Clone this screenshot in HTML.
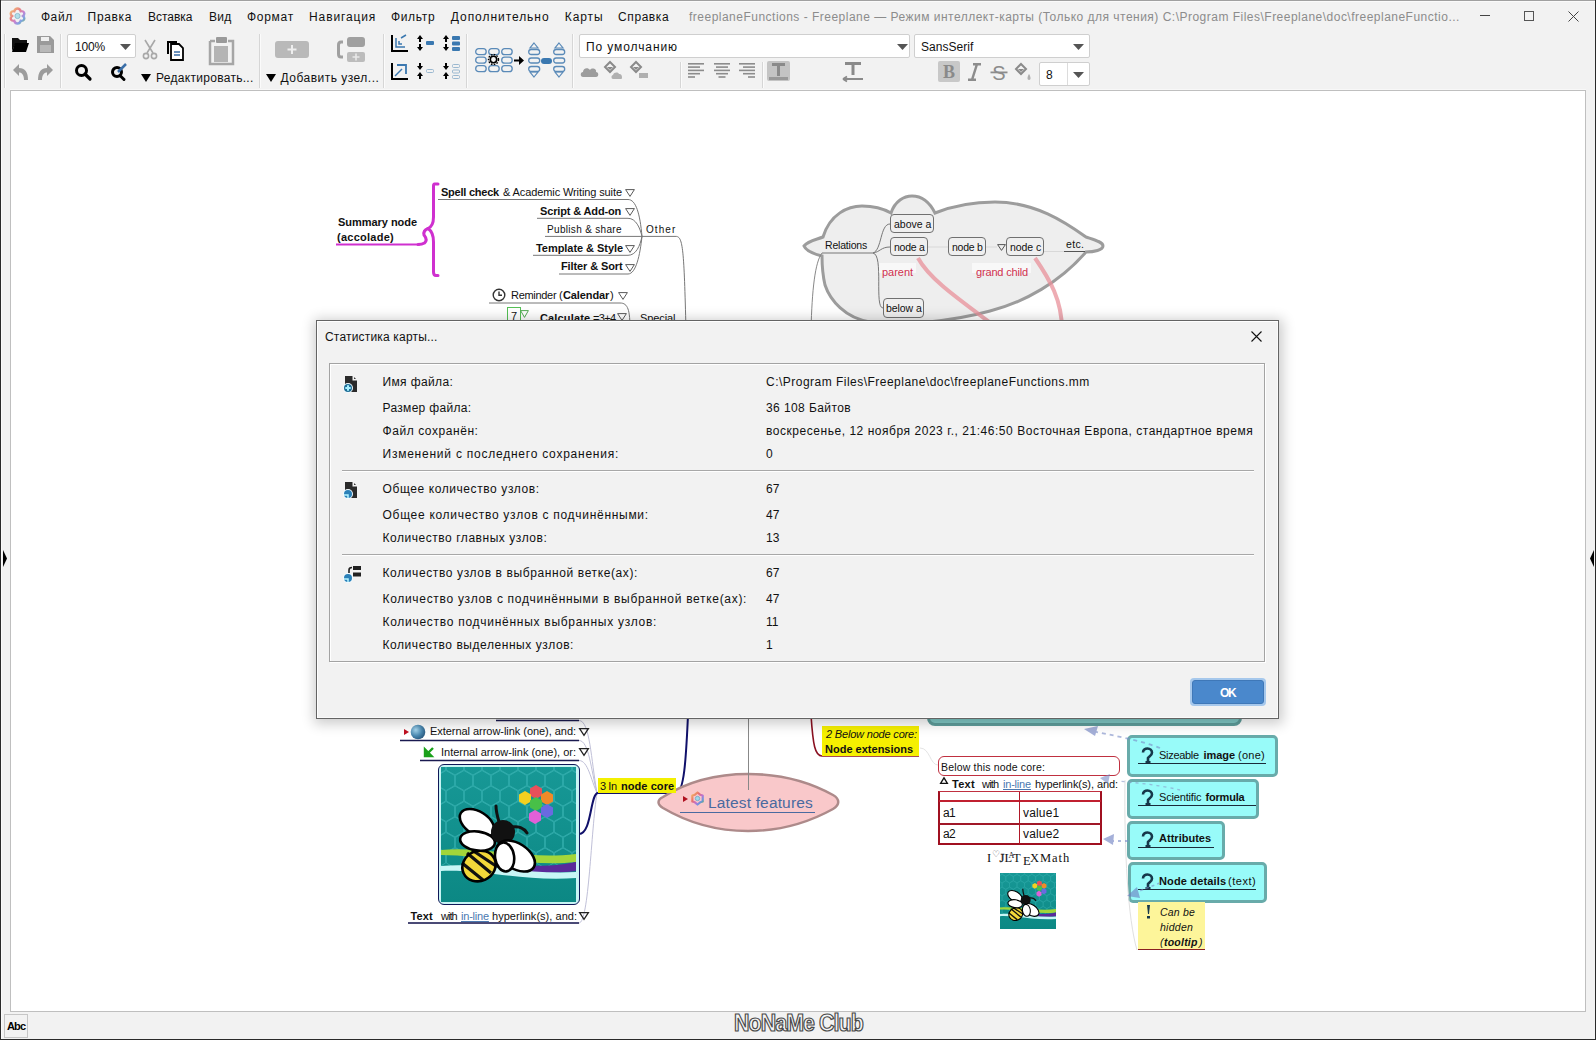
<!DOCTYPE html>
<html><head><meta charset="utf-8"><title>Freeplane</title>
<style>
html,body{margin:0;padding:0;}
body{width:1596px;height:1040px;position:relative;overflow:hidden;background:#f2f2f2;font-family:'Liberation Sans',sans-serif;}
svg{display:block}
</style></head><body>
<div style="position:absolute;left:0px;top:0px;width:1596px;height:1px;background:#a0a0a0"></div><div style="position:absolute;left:1px;top:1px;width:1594px;height:1px;background:#fafafa"></div><div style="position:absolute;left:1px;top:1px;width:1px;height:1038px;background:#fafafa"></div><div style="position:absolute;left:10px;top:89px;width:1576px;height:1px;background:#f8f8f8"></div><div style="position:absolute;left:10px;top:90px;width:1576px;height:922px;background:#fff;border:1px solid #bfbfbf;box-sizing:border-box"></div><svg style="position:absolute;left:9px;top:7px;overflow:visible;" width="17" height="18" viewBox="0 0 17 18">
<defs><linearGradient id="rb" x1="0" y1="0" x2="1" y2="1"><stop offset="0" stop-color="#f3c060"/><stop offset="0.35" stop-color="#e87070"/><stop offset="0.6" stop-color="#c070d0"/><stop offset="0.8" stop-color="#6a98e0"/><stop offset="1" stop-color="#60a860"/></linearGradient></defs>
<g transform="translate(8.5,9)" opacity="0.85">
<path d="M0,-7.5 C2,-7.5 3,-5.5 3.2,-4.8 C4.5,-5 6.8,-4.5 6.8,-2.5 C6.8,-1 5.5,0 5.5,0 C5.5,0 6.8,1 6.8,2.5 C6.8,4.5 4.5,5 3.2,4.8 C3,5.5 2,7.5 0,7.5 C-2,7.5 -3,5.5 -3.2,4.8 C-4.5,5 -6.8,4.5 -6.8,2.5 C-6.8,1 -5.5,0 -5.5,0 C-5.5,0 -6.8,-1 -6.8,-2.5 C-6.8,-4.5 -4.5,-5 -3.2,-4.8 C-3,-5.5 -2,-7.5 0,-7.5 Z" fill="none" stroke="url(#rb)" stroke-width="2.4"/>
<circle r="2.6" fill="#a8dce8" stroke="#70a8c0" stroke-width="0.8"/>
</g>
</svg><div style="position:absolute;left:40.90px;top:11px;white-space:pre;font:normal normal 12px 'Liberation Sans';line-height:12px;color:#111;letter-spacing:0.600px;">Файл</div><div style="position:absolute;left:87.60px;top:11px;white-space:pre;font:normal normal 12px 'Liberation Sans';line-height:12px;color:#111;letter-spacing:0.668px;">Правка</div><div style="position:absolute;left:147.90px;top:11px;white-space:pre;font:normal normal 12px 'Liberation Sans';line-height:12px;color:#111;letter-spacing:-0.005px;">Вставка</div><div style="position:absolute;left:208.90px;top:11px;white-space:pre;font:normal normal 12px 'Liberation Sans';line-height:12px;color:#111;letter-spacing:0.296px;">Вид</div><div style="position:absolute;left:247.00px;top:11px;white-space:pre;font:normal normal 12px 'Liberation Sans';line-height:12px;color:#111;letter-spacing:0.714px;">Формат</div><div style="position:absolute;left:309.10px;top:11px;white-space:pre;font:normal normal 12px 'Liberation Sans';line-height:12px;color:#111;letter-spacing:0.865px;">Навигация</div><div style="position:absolute;left:390.90px;top:11px;white-space:pre;font:normal normal 12px 'Liberation Sans';line-height:12px;color:#111;letter-spacing:0.672px;">Фильтр</div><div style="position:absolute;left:450.80px;top:11px;white-space:pre;font:normal normal 12px 'Liberation Sans';line-height:12px;color:#111;letter-spacing:0.951px;">Дополнительно</div><div style="position:absolute;left:564.80px;top:11px;white-space:pre;font:normal normal 12px 'Liberation Sans';line-height:12px;color:#111;letter-spacing:0.907px;">Карты</div><div style="position:absolute;left:618.10px;top:11px;white-space:pre;font:normal normal 12px 'Liberation Sans';line-height:12px;color:#111;letter-spacing:0.567px;">Справка</div><div style="position:absolute;left:689.00px;top:11px;white-space:pre;font:normal normal 12px 'Liberation Sans';line-height:12px;color:#8c8c8c;letter-spacing:0.488px;">freeplaneFunctions - Freeplane — Режим интеллект-карты (Только для чтения) C:\Program Files\Freeplane\doc\freeplaneFunctio...</div><div style="position:absolute;left:1480px;top:15px;width:10px;height:1px;background:#444"></div><div style="position:absolute;left:1524px;top:11px;width:10px;height:10px;border:1px solid #555;box-sizing:border-box"></div><svg style="position:absolute;left:1568px;top:11px;overflow:visible;" width="11" height="11" viewBox="0 0 11 11"><path d="M0.5,0.5 L10.5,10.5 M10.5,0.5 L0.5,10.5" stroke="#444" stroke-width="1"/></svg><div style="position:absolute;left:0px;top:0px;width:1px;height:1040px;background:#2a2a2a"></div><div style="position:absolute;left:1595px;top:0px;width:1px;height:1040px;background:#2a2a2a"></div><div style="position:absolute;left:0px;top:1039px;width:1596px;height:1px;background:#2a2a2a"></div><div style="position:absolute;left:4px;top:34px;width:1px;height:54px;background:#d6d6d6"></div><div style="position:absolute;left:5px;top:34px;width:1px;height:54px;background:#fbfbfb"></div><div style="position:absolute;left:60px;top:34px;width:1px;height:54px;background:#d6d6d6"></div><div style="position:absolute;left:61px;top:34px;width:1px;height:54px;background:#fbfbfb"></div><div style="position:absolute;left:259px;top:34px;width:1px;height:54px;background:#d6d6d6"></div><div style="position:absolute;left:260px;top:34px;width:1px;height:54px;background:#fbfbfb"></div><div style="position:absolute;left:383px;top:34px;width:1px;height:54px;background:#d6d6d6"></div><div style="position:absolute;left:384px;top:34px;width:1px;height:54px;background:#fbfbfb"></div><div style="position:absolute;left:466px;top:34px;width:1px;height:54px;background:#d6d6d6"></div><div style="position:absolute;left:467px;top:34px;width:1px;height:54px;background:#fbfbfb"></div><div style="position:absolute;left:572px;top:34px;width:1px;height:54px;background:#d6d6d6"></div><div style="position:absolute;left:573px;top:34px;width:1px;height:54px;background:#fbfbfb"></div><div style="position:absolute;left:680px;top:62px;width:1px;height:26px;background:#d6d6d6"></div><div style="position:absolute;left:681px;top:62px;width:1px;height:26px;background:#fbfbfb"></div><div style="position:absolute;left:762px;top:62px;width:1px;height:26px;background:#d6d6d6"></div><div style="position:absolute;left:763px;top:62px;width:1px;height:26px;background:#fbfbfb"></div><svg style="position:absolute;left:11px;top:36px;overflow:visible;" width="19" height="17" viewBox="0 0 19 17"><path d="M1,2 h6 l2,2 h7 v3 H5 L1,15 Z" fill="#111"/><path d="M4,7 H18 L15,16 H1 Z" fill="#000"/></svg><svg style="position:absolute;left:37px;top:36px;overflow:visible;" width="17" height="17" viewBox="0 0 17 17"><path d="M0,0 H13 L17,4 V17 H0 Z" fill="#9a9a9a"/><rect x="4" y="1" width="8" height="4" fill="#f0f0f0"/><rect x="3" y="9" width="11" height="7" fill="#b8b8b8"/></svg><svg style="position:absolute;left:12px;top:64px;overflow:visible;" width="17" height="16" viewBox="0 0 17 16"><path d="M1,6 L7,0 V4 C13,4 16,8 16,16 H12 C12,11 10,8.5 7,8.5 V12 Z" fill="#9c9c9c"/></svg><svg style="position:absolute;left:37px;top:64px;overflow:visible;" width="17" height="16" viewBox="0 0 17 16"><path d="M16,6 L10,0 V4 C4,4 1,8 1,16 H5 C5,11 7,8.5 10,8.5 V12 Z" fill="#9c9c9c"/></svg><div style="position:absolute;left:67px;top:34px;width:69px;height:24px;background:#fff;border:1px solid #cfcfcf;border-radius:2px;box-sizing:border-box"></div><div style="position:absolute;left:75.00px;top:41px;white-space:pre;font:normal normal 12px 'Liberation Sans';line-height:12px;color:#111;letter-spacing:-0.174px;">100%</div><svg style="position:absolute;left:120px;top:44px;overflow:visible;" width="11" height="6" viewBox="0 0 11 6"><path d="M0,0 H11 L5.5,6 Z" fill="#555"/></svg><svg style="position:absolute;left:74px;top:63px;overflow:visible;" width="18" height="18" viewBox="0 0 18 18"><circle cx="7.5" cy="7.5" r="5" fill="none" stroke="#000" stroke-width="3"/><path d="M11,11 L16,16" stroke="#000" stroke-width="3.2" stroke-linecap="round"/></svg><svg style="position:absolute;left:110px;top:63px;overflow:visible;" width="19" height="18" viewBox="0 0 19 18"><circle cx="7" cy="9" r="4.5" fill="none" stroke="#000" stroke-width="3"/><path d="M10,12.5 L14,16.5" stroke="#000" stroke-width="3" stroke-linecap="round"/><path d="M8,9 L16,1" stroke="#3a6ea8" stroke-width="2.5"/></svg><svg style="position:absolute;left:142px;top:40px;overflow:visible;" width="16" height="20" viewBox="0 0 16 20"><path d="M3,0 L11,13 M13,0 L5,13" stroke="#a8a8a8" stroke-width="1.6"/><circle cx="4" cy="16" r="2.6" fill="none" stroke="#a8a8a8" stroke-width="1.6"/><circle cx="12" cy="16" r="2.6" fill="none" stroke="#a8a8a8" stroke-width="1.6"/></svg><svg style="position:absolute;left:166px;top:40px;overflow:visible;" width="19" height="21" viewBox="0 0 19 21"><path d="M1,1 H11 V3 H3 V14 H1 Z" fill="#000"/><path d="M5,4 H13 L17,8 V20 H5 Z" fill="#fff" stroke="#000" stroke-width="1.8"/><path d="M8,12 H14 M8,15 H14" stroke="#3a6ea8" stroke-width="1.6"/></svg><svg style="position:absolute;left:208px;top:36px;overflow:visible;" width="27" height="30" viewBox="0 0 27 30"><path d="M2,5 H7 M20,5 H25 V28 H2 V5" fill="none" stroke="#a6a6a6" stroke-width="2.5"/><rect x="8" y="1" width="11" height="6" fill="#9a9a9a" rx="1"/><path d="M6,10 H20 V26 H6 Z" fill="#b4b4b4"/></svg><svg style="position:absolute;left:141px;top:74px;overflow:visible;" width="10" height="8" viewBox="0 0 10 8"><path d="M0,0 H10 L5,8 Z" fill="#000"/></svg><div style="position:absolute;left:156.00px;top:72px;white-space:pre;font:normal normal 12px 'Liberation Sans';line-height:12px;color:#111;letter-spacing:0.296px;">Редактировать...</div><svg style="position:absolute;left:266px;top:74px;overflow:visible;" width="10" height="8" viewBox="0 0 10 8"><path d="M0,0 H10 L5,8 Z" fill="#000"/></svg><div style="position:absolute;left:280.50px;top:72px;white-space:pre;font:normal normal 12px 'Liberation Sans';line-height:12px;color:#111;letter-spacing:0.488px;">Добавить узел...</div><svg style="position:absolute;left:275px;top:41px;overflow:visible;" width="34" height="18" viewBox="0 0 34 18"><rect x="0" y="0" width="34" height="17" rx="3" fill="#b9b9b9"/><path d="M17,4 V13 M12.5,8.5 H21.5" stroke="#eee" stroke-width="2"/></svg><svg style="position:absolute;left:336px;top:37px;overflow:visible;" width="30" height="26" viewBox="0 0 30 26"><path d="M7,5 H5 Q2.5,5 2.5,8 V17 Q2.5,20 5,20 H7" fill="none" stroke="#a0a0a0" stroke-width="3"/><rect x="11" y="0" width="18" height="10" rx="3" fill="#a0a0a0"/><rect x="11" y="15" width="18" height="10" rx="2" fill="#bcbcbc"/><path d="M20,16.5 V23.5 M16.5,20 H23.5" stroke="#e8e8e8" stroke-width="1.6"/></svg><svg style="position:absolute;left:391px;top:35px;overflow:visible;" width="18" height="17" viewBox="0 0 18 17"><path d="M1,0 V16 H17" fill="none" stroke="#000" stroke-width="2"/><path d="M5,3 V12 H14" fill="none" stroke="#3b78b0" stroke-width="1.5"/><path d="M8,6 V9 H11 M10,3 L15,0" fill="none" stroke="#3b78b0" stroke-width="1.5"/></svg><svg style="position:absolute;left:391px;top:63px;overflow:visible;" width="18" height="17" viewBox="0 0 18 17"><path d="M1,0 V16 H17" fill="none" stroke="#000" stroke-width="2"/><path d="M6,2 H15 V11" fill="none" stroke="#3b78b0" stroke-width="1.8"/><path d="M4,13 L11,6" fill="none" stroke="#3b78b0" stroke-width="1.4"/></svg><svg style="position:absolute;left:416px;top:35px;overflow:visible;" width="19" height="17" viewBox="0 0 19 17"><path d="M4,0 L7,4 H5 V7 H3 V4 H1 Z M4,16 L7,12 H5 V9 H3 V12 H1 Z" fill="#000"/><rect x="10" y="6" width="8" height="4" rx="1" fill="#3a78b0"/></svg><svg style="position:absolute;left:416px;top:63px;overflow:visible;" width="19" height="17" viewBox="0 0 19 17"><path d="M4,7 L7,3 H5 V0 H3 V3 H1 Z M4,9 L7,13 H5 V16 H3 V13 H1 Z" fill="#000"/><rect x="10.5" y="6.5" width="7" height="3" rx="1" fill="none" stroke="#9ab8d0"/></svg><svg style="position:absolute;left:442px;top:35px;overflow:visible;" width="18" height="17" viewBox="0 0 18 17"><path d="M4,0 L7,4 H5 V7 H3 V4 H1 Z M4,16 L7,12 H5 V9 H3 V12 H1 Z" fill="#000"/><rect x="10" y="1" width="8" height="4" rx="1" fill="#3a78b0"/><rect x="10" y="6.5" width="8" height="4" rx="1" fill="#3a78b0"/><rect x="10" y="12" width="8" height="4" rx="1" fill="#3a78b0"/></svg><svg style="position:absolute;left:442px;top:63px;overflow:visible;" width="18" height="17" viewBox="0 0 18 17"><path d="M4,7 L7,3 H5 V0 H3 V3 H1 Z M4,9 L7,13 H5 V16 H3 V13 H1 Z" fill="#000"/><rect x="10.5" y="1.5" width="7" height="3" rx="1" fill="none" stroke="#9ab8d0"/><rect x="10.5" y="7" width="7" height="3" rx="1" fill="none" stroke="#9ab8d0"/><rect x="10.5" y="12.5" width="7" height="3" rx="1" fill="none" stroke="#9ab8d0"/></svg><svg style="position:absolute;left:475px;top:48px;overflow:visible;" width="38" height="25" viewBox="0 0 38 25"><rect x="0.7" y="0.7" width="10.5" height="6" rx="3" fill="none" stroke="#5a8ab8" stroke-width="1.3"/><rect x="13.7" y="0.7" width="10.5" height="6" rx="3" fill="none" stroke="#5a8ab8" stroke-width="1.3"/><rect x="26.7" y="0.7" width="10.5" height="6" rx="3" fill="none" stroke="#5a8ab8" stroke-width="1.3"/><rect x="0.7" y="9.2" width="10.5" height="6" rx="3" fill="none" stroke="#5a8ab8" stroke-width="1.3"/><rect x="26.7" y="9.2" width="10.5" height="6" rx="3" fill="none" stroke="#5a8ab8" stroke-width="1.3"/><rect x="0.7" y="17.7" width="10.5" height="6" rx="3" fill="none" stroke="#5a8ab8" stroke-width="1.3"/><rect x="13.7" y="17.7" width="10.5" height="6" rx="3" fill="none" stroke="#5a8ab8" stroke-width="1.3"/><rect x="26.7" y="17.7" width="10.5" height="6" rx="3" fill="none" stroke="#5a8ab8" stroke-width="1.3"/><circle cx="18.5" cy="11.5" r="3.2" fill="none" stroke="#000" stroke-width="1.6"/><circle cx="18.5" cy="11.5" r="5" fill="none" stroke="#000" stroke-width="1.4" stroke-dasharray="1.6 1.3"/></svg><svg style="position:absolute;left:514px;top:56px;overflow:visible;" width="10" height="9" viewBox="0 0 10 9"><path d="M0,3.5 H5 V0 L10,4.5 L5,9 V5.5 H0 Z" fill="#000"/></svg><svg style="position:absolute;left:528px;top:43px;overflow:visible;" width="13" height="35" viewBox="0 0 13 35"><path d="M6,0 L10,5 H2 Z" fill="none" stroke="#5a8ab8" stroke-width="1.2"/><rect x="0.7" y="6.5" width="11" height="5" rx="2.5" fill="none" stroke="#5a8ab8" stroke-width="1.3"/><rect x="0.7" y="15" width="11" height="5" rx="2.5" fill="none" stroke="#5a8ab8" stroke-width="1.3"/><rect x="0.7" y="23.5" width="11" height="5" rx="2.5" fill="none" stroke="#5a8ab8" stroke-width="1.3"/><path d="M6,34 L10,29 H2 Z" fill="none" stroke="#5a8ab8" stroke-width="1.2"/></svg><div style="position:absolute;left:541px;top:58px;width:11px;height:6px;background:#3a78b0;border-radius:3px"></div><svg style="position:absolute;left:553px;top:43px;overflow:visible;" width="13" height="35" viewBox="0 0 13 35"><path d="M6,0 L10,5 H2 Z" fill="none" stroke="#5a8ab8" stroke-width="1.2"/><rect x="0.7" y="6.5" width="11" height="5" rx="2.5" fill="none" stroke="#5a8ab8" stroke-width="1.3"/><rect x="0.7" y="15" width="11" height="5" rx="2.5" fill="none" stroke="#5a8ab8" stroke-width="1.3"/><rect x="0.7" y="23.5" width="11" height="5" rx="2.5" fill="none" stroke="#5a8ab8" stroke-width="1.3"/><path d="M6,34 L10,29 H2 Z" fill="none" stroke="#5a8ab8" stroke-width="1.2"/></svg><div style="position:absolute;left:579px;top:34px;width:331px;height:24px;background:#fff;border:1px solid #cfcfcf;border-radius:2px;box-sizing:border-box"></div><div style="position:absolute;left:586.00px;top:41px;white-space:pre;font:normal normal 12px 'Liberation Sans';line-height:12px;color:#111;letter-spacing:0.895px;">По умолчанию</div><svg style="position:absolute;left:897px;top:44px;overflow:visible;" width="11" height="6" viewBox="0 0 11 6"><path d="M0,0 H11 L5.5,6 Z" fill="#555"/></svg><div style="position:absolute;left:914px;top:34px;width:176px;height:24px;background:#fff;border:1px solid #cfcfcf;border-radius:2px;box-sizing:border-box"></div><div style="position:absolute;left:921.00px;top:41px;white-space:pre;font:normal normal 12px 'Liberation Sans';line-height:12px;color:#111;letter-spacing:0.039px;">SansSerif</div><svg style="position:absolute;left:1073px;top:44px;overflow:visible;" width="11" height="6" viewBox="0 0 11 6"><path d="M0,0 H11 L5.5,6 Z" fill="#555"/></svg><svg style="position:absolute;left:580px;top:65px;overflow:visible;" width="19" height="13" viewBox="0 0 19 13"><path d="M3,12 C0,12 0,7 3,7 C3,3 8,2 10,5 C12,2 17,4 16,7 C19,7 19,12 16,12 Z" fill="#9c9c9c"/></svg><svg style="position:absolute;left:604px;top:62px;overflow:visible;" width="20" height="18" viewBox="0 0 20 18"><path d="M6,0 L11,5 L6,10 L1,5 Z" fill="none" stroke="#8a8a8a" stroke-width="2"/><path d="M3,5 H9 L6,8 Z" fill="#8a8a8a"/><path d="M9,17 C7,17 7,13 9,13 C10,10 14,10 15,12 C18,11 19,17 17,17 Z" fill="#b0b0b0"/></svg><svg style="position:absolute;left:630px;top:62px;overflow:visible;" width="20" height="18" viewBox="0 0 20 18"><path d="M6,0 L11,5 L6,10 L1,5 Z" fill="none" stroke="#8a8a8a" stroke-width="2"/><path d="M3,5 H9 L6,8 Z" fill="#8a8a8a"/><rect x="9" y="11" width="9" height="5" fill="#b0b0b0"/></svg><svg style="position:absolute;left:688px;top:63px;overflow:visible;" width="16" height="16" viewBox="0 0 16 16"><rect x="0" y="0.0" width="16" height="1.6" fill="#8c8c8c"/><rect x="0" y="3.3" width="12" height="1.6" fill="#8c8c8c"/><rect x="0" y="6.6" width="16" height="1.6" fill="#8c8c8c"/><rect x="0" y="9.899999999999999" width="12" height="1.6" fill="#8c8c8c"/><rect x="0" y="13.2" width="7" height="1.6" fill="#8c8c8c"/></svg><svg style="position:absolute;left:714px;top:63px;overflow:visible;" width="16" height="16" viewBox="0 0 16 16"><rect x="0.0" y="0.0" width="16" height="1.6" fill="#8c8c8c"/><rect x="2.0" y="3.3" width="12" height="1.6" fill="#8c8c8c"/><rect x="0.0" y="6.6" width="16" height="1.6" fill="#8c8c8c"/><rect x="2.0" y="9.899999999999999" width="12" height="1.6" fill="#8c8c8c"/><rect x="4.5" y="13.2" width="7" height="1.6" fill="#8c8c8c"/></svg><svg style="position:absolute;left:739px;top:63px;overflow:visible;" width="16" height="16" viewBox="0 0 16 16"><rect x="0" y="0.0" width="16" height="1.6" fill="#8c8c8c"/><rect x="4" y="3.3" width="12" height="1.6" fill="#8c8c8c"/><rect x="0" y="6.6" width="16" height="1.6" fill="#8c8c8c"/><rect x="4" y="9.899999999999999" width="12" height="1.6" fill="#8c8c8c"/><rect x="9" y="13.2" width="7" height="1.6" fill="#8c8c8c"/></svg><svg style="position:absolute;left:767px;top:61px;overflow:visible;" width="23" height="21" viewBox="0 0 23 21"><rect x="0" y="0" width="23" height="20" rx="2" fill="#c4c4c4"/><path d="M5,2 H18 V5 H13 V15 H10 V5 H5 Z" fill="#8a8a8a"/><rect x="2" y="16" width="19" height="3" fill="#999"/></svg><svg style="position:absolute;left:842px;top:61px;overflow:visible;" width="22" height="21" viewBox="0 0 22 21"><path d="M3,1 H19 V4 H12.5 V14 H9.5 V4 H3 Z" fill="#8a8a8a"/><path d="M1,18 H21 M1,18 L5,15.5 M1,18 L5,20.5" stroke="#8a8a8a" stroke-width="1.8" fill="none"/></svg><svg style="position:absolute;left:938px;top:61px;overflow:visible;" width="22" height="21" viewBox="0 0 22 21"><rect x="0" y="0" width="22" height="21" rx="2" fill="#c8c8c8"/><text x="11" y="17" text-anchor="middle" font-family="Liberation Serif" font-weight="bold" font-size="18" fill="#8a8a8a">B</text></svg><svg style="position:absolute;left:966px;top:63px;overflow:visible;" width="16" height="18" viewBox="0 0 16 18"><path d="M7,1.2 H15 M2,16.8 H10 M11,1.2 L6,16.8" stroke="#8c8c8c" stroke-width="2.4" fill="none"/></svg><svg style="position:absolute;left:990px;top:62px;overflow:visible;" width="18" height="20" viewBox="0 0 18 20"><text x="9" y="17.5" text-anchor="middle" font-family="Liberation Sans" font-size="20" fill="#8c8c8c">S</text><rect x="0.5" y="9.5" width="17" height="1.8" fill="#8c8c8c"/></svg><svg style="position:absolute;left:1015px;top:64px;overflow:visible;" width="18" height="17" viewBox="0 0 18 17"><path d="M6,0 L11,5 L6,10 L1,5 Z" fill="none" stroke="#8a8a8a" stroke-width="2"/><path d="M3,5 H9 L6,8 Z" fill="#8a8a8a"/><path d="M14,10 C12,13 12,16 14,16 C16,16 16,13 14,10 Z" fill="#b0b0b0"/></svg><div style="position:absolute;left:1039px;top:62px;width:51px;height:24px;background:#fff;border:1px solid #cfcfcf;border-radius:2px;box-sizing:border-box"></div><div style="position:absolute;left:1067px;top:63px;width:1px;height:22px;background:#dcdcdc"></div><div style="position:absolute;left:1046.00px;top:69px;white-space:pre;font:normal normal 12px 'Liberation Sans';line-height:12px;color:#111;">8</div><svg style="position:absolute;left:1073px;top:72px;overflow:visible;" width="11" height="6" viewBox="0 0 11 6"><path d="M0,0 H11 L5.5,6 Z" fill="#555"/></svg><svg style="position:absolute;left:2px;top:550px;overflow:visible;" width="6" height="17" viewBox="0 0 6 17"><path d="M1,0 L5,8.5 L1,17 Z" fill="#000"/></svg><svg style="position:absolute;left:1589px;top:550px;overflow:visible;" width="6" height="17" viewBox="0 0 6 17"><path d="M5,0 L1,8.5 L5,17 Z" fill="#000"/></svg><div style="position:absolute;left:734px;top:1012px;height:24px;font:bold 23px 'Liberation Sans';line-height:23px;letter-spacing:-1px;color:#f6f6f6;-webkit-text-stroke:1.2px #4a4a4a;white-space:pre;transform-origin:0 0;transform:scaleX(0.93)">NoNaMe Club</div><div style="position:absolute;left:4px;top:1014px;width:24px;height:24px;border:1px solid #c6c6c6;box-sizing:border-box;background:#f2f2f2"></div><div style="position:absolute;left:7.00px;top:1021px;white-space:pre;font:normal bold 11px 'Liberation Sans';line-height:11px;color:#000;letter-spacing:-0.832px;">Abc</div><svg style="position:absolute;left:0px;top:0px;overflow:visible;" width="1596" height="1040" viewBox="0 0 1596 1040">
<path d="M804,246 C808,241 815,240 823,237 C830,214 848,206 862,206 C875,206 884,209 891,213 C895,201 904,196 912,196 C922,196 930,203 935,213 C955,205 975,202 995,202 C1035,202 1065,222 1086,237 C1095,240 1103,242 1103,246 C1103,250 1094,252 1086,252 C1060,282 1025,302 990,311 C950,322 900,326 870,322 C845,318 830,300 825,285 C822,272 822,262 822,256 C814,254 806,251 804,246 Z" fill="#eeeeee" stroke="#9c9c9c" stroke-width="3"/>
</svg><svg style="position:absolute;left:0px;top:0px;overflow:visible;" width="1596" height="1040" viewBox="0 0 1596 1040">
<path d="M822,253 H873" stroke="#777" stroke-width="1" fill="none"/>
<path d="M822,253 C815,262 812,290 811,330" stroke="#888" stroke-width="1" fill="none"/>
<path d="M873,253 C882,250 880,224 890,224" stroke="#777" stroke-width="1" fill="none"/>
<path d="M873,253 C880,252 881,247 890,247" stroke="#777" stroke-width="1" fill="none"/>
<path d="M873,253 C884,255 874,308 883,308" stroke="#777" stroke-width="1" fill="none"/>
<path d="M928,247 H948 M986,247 H997 M1044,251.5 H1064" stroke="#d8d8d8" stroke-width="1" fill="none"/>
<path d="M1064,251.5 H1085" stroke="#555" stroke-width="1" fill="none"/>
</svg><div style="position:absolute;left:890px;top:214px;width:44px;height:19px;border:1px solid #707070;border-radius:4px;box-sizing:border-box;background:#efefef"></div><div style="position:absolute;left:894.00px;top:219px;white-space:pre;font:normal normal 10.5px 'Liberation Sans';line-height:10.5px;color:#111;letter-spacing:-0.004px;">above a</div><div style="position:absolute;left:890px;top:237px;width:38px;height:19px;border:1px solid #707070;border-radius:4px;box-sizing:border-box;background:#efefef"></div><div style="position:absolute;left:894.00px;top:242px;white-space:pre;font:normal normal 10.5px 'Liberation Sans';line-height:10.5px;color:#111;letter-spacing:-0.255px;">node a</div><div style="position:absolute;left:948px;top:237px;width:38px;height:19px;border:1px solid #707070;border-radius:4px;box-sizing:border-box;background:#efefef"></div><div style="position:absolute;left:952.00px;top:242px;white-space:pre;font:normal normal 10.5px 'Liberation Sans';line-height:10.5px;color:#111;letter-spacing:-0.255px;">node b</div><div style="position:absolute;left:1006px;top:237px;width:38px;height:19px;border:1px solid #707070;border-radius:4px;box-sizing:border-box;background:#efefef"></div><div style="position:absolute;left:1010.00px;top:242px;white-space:pre;font:normal normal 10.5px 'Liberation Sans';line-height:10.5px;color:#111;letter-spacing:-0.055px;">node c</div><div style="position:absolute;left:883px;top:298px;width:41px;height:20px;border:1px solid #707070;border-radius:4px;box-sizing:border-box;background:#efefef"></div><div style="position:absolute;left:886.00px;top:303px;white-space:pre;font:normal normal 10.5px 'Liberation Sans';line-height:10.5px;color:#111;letter-spacing:-0.059px;">below a</div><div style="position:absolute;left:825.00px;top:240px;white-space:pre;font:normal normal 10.5px 'Liberation Sans';line-height:10.5px;color:#111;letter-spacing:-0.190px;">Relations</div><div style="position:absolute;left:1066.00px;top:239px;white-space:pre;font:normal normal 10.5px 'Liberation Sans';line-height:10.5px;color:#111;letter-spacing:0.331px;">etc.</div><svg style="position:absolute;left:997px;top:244px;overflow:visible;" width="9" height="7" viewBox="0 0 9 7"><path d="M0.6,0.6 H8.4 L4.5,6.4 Z" fill="none" stroke="#555" stroke-width="1" stroke-linejoin="miter"/></svg><div style="position:absolute;left:879px;top:263px;width:37px;height:10px;background:rgba(255,255,255,0.6)"></div><div style="position:absolute;left:972px;top:263px;width:59px;height:10px;background:rgba(255,255,255,0.6)"></div><svg style="position:absolute;left:0px;top:0px;overflow:visible;" width="1596" height="1040" viewBox="0 0 1596 1040">
<path d="M918,258 C930,280 960,300 1000,330" stroke="#e8909a" stroke-opacity="0.75" stroke-width="4" fill="none"/>
<path d="M1035,258 C1050,280 1062,300 1062,330" stroke="#e8909a" stroke-opacity="0.75" stroke-width="4" fill="none"/>
</svg><div style="position:absolute;left:882.00px;top:267px;white-space:pre;font:normal normal 11px 'Liberation Sans';line-height:11px;color:#d0304e;letter-spacing:-0.027px;">parent</div><div style="position:absolute;left:976.00px;top:267px;white-space:pre;font:normal normal 11px 'Liberation Sans';line-height:11px;color:#d0304e;letter-spacing:-0.170px;">grand child</div><svg style="position:absolute;left:0px;top:0px;overflow:visible;" width="1596" height="1040" viewBox="0 0 1596 1040">
<path d="M438,184 H434.5 Q433.5,184 433.5,186 V217 Q433.5,226 428,228.5 Q423,230.5 424,235 Q428,240 424.5,243 Q422,244.5 418,244.5" stroke="#cf30cf" stroke-width="3" fill="none" stroke-linecap="round"/>
<path d="M428,228.5 Q433.5,232 433.5,242 V272 Q433.5,275.5 436,275.5 H438" stroke="#cf30cf" stroke-width="3" fill="none" stroke-linecap="round"/>
<path d="M336,244.5 H420" stroke="#cf30cf" stroke-width="2" fill="none"/>
<path d="M438,199.5 H628 C636,199.5 640,214 642,236.4" stroke="#777" stroke-width="1" fill="none"/>
<path d="M537,218.3 H628 C636,218.3 640,228 642,236.4" stroke="#777" stroke-width="1" fill="none"/>
<path d="M545,236.4 H676 C683,236.4 684,250 686,330" stroke="#777" stroke-width="1" fill="none"/>
<path d="M533,255.3 H628 C636,255.3 640,246 642,236.4" stroke="#777" stroke-width="1" fill="none"/>
<path d="M559,274 H628 C636,274 640,255 642,236.4" stroke="#777" stroke-width="1" fill="none"/>
<path d="M489,303 H620 C628,303 630,310 630,330" stroke="#777" stroke-width="1" fill="none"/>
</svg><div style="position:absolute;left:338.00px;top:217px;white-space:pre;font:normal bold 11px 'Liberation Sans';line-height:11px;color:#111;letter-spacing:-0.032px;">Summary node</div><div style="position:absolute;left:337.00px;top:232px;white-space:pre;font:normal bold 11px 'Liberation Sans';line-height:11px;color:#111;letter-spacing:0.250px;">(accolade)</div><div style="position:absolute;left:441.00px;top:187px;white-space:pre;font:normal bold 11px 'Liberation Sans';line-height:11px;color:#111;letter-spacing:-0.241px;">Spell check</div><div style="position:absolute;left:503.00px;top:187px;white-space:pre;font:normal normal 11px 'Liberation Sans';line-height:11px;color:#111;letter-spacing:-0.106px;">&amp; Academic Writing suite</div><svg style="position:absolute;left:625px;top:189px;overflow:visible;" width="10" height="8" viewBox="0 0 10 8"><path d="M0.6,0.6 H9.4 L5.0,7.4 Z" fill="none" stroke="#5a5a5a" stroke-width="1" stroke-linejoin="miter"/></svg><div style="position:absolute;left:540.00px;top:205.5px;white-space:pre;font:normal bold 11px 'Liberation Sans';line-height:11px;color:#111;letter-spacing:-0.142px;">Script &amp; Add-on</div><svg style="position:absolute;left:625px;top:208px;overflow:visible;" width="10" height="8" viewBox="0 0 10 8"><path d="M0.6,0.6 H9.4 L5.0,7.4 Z" fill="none" stroke="#5a5a5a" stroke-width="1" stroke-linejoin="miter"/></svg><div style="position:absolute;left:547.00px;top:224.5px;white-space:pre;font:normal normal 10px 'Liberation Sans';line-height:10px;color:#111;letter-spacing:0.323px;">Publish &amp; share</div><div style="position:absolute;left:536.00px;top:242.5px;white-space:pre;font:normal bold 11px 'Liberation Sans';line-height:11px;color:#111;letter-spacing:-0.047px;">Template &amp; Style</div><svg style="position:absolute;left:625px;top:245px;overflow:visible;" width="10" height="8" viewBox="0 0 10 8"><path d="M0.6,0.6 H9.4 L5.0,7.4 Z" fill="none" stroke="#5a5a5a" stroke-width="1" stroke-linejoin="miter"/></svg><div style="position:absolute;left:561.00px;top:261px;white-space:pre;font:normal bold 11px 'Liberation Sans';line-height:11px;color:#111;letter-spacing:-0.107px;">Filter &amp; Sort</div><svg style="position:absolute;left:625px;top:264px;overflow:visible;" width="10" height="8" viewBox="0 0 10 8"><path d="M0.6,0.6 H9.4 L5.0,7.4 Z" fill="none" stroke="#5a5a5a" stroke-width="1" stroke-linejoin="miter"/></svg><div style="position:absolute;left:646.00px;top:224.5px;white-space:pre;font:normal normal 10px 'Liberation Sans';line-height:10px;color:#111;letter-spacing:1.080px;">Other</div><svg style="position:absolute;left:492px;top:288px;overflow:visible;" width="14" height="14" viewBox="0 0 14 14"><circle cx="7" cy="7" r="5.8" fill="none" stroke="#333" stroke-width="1.4"/><path d="M7,3.5 V7.3 H10" fill="none" stroke="#333" stroke-width="1.4"/></svg><div style="position:absolute;left:511.00px;top:290px;white-space:pre;font:normal normal 11px 'Liberation Sans';line-height:11px;color:#111;letter-spacing:-0.305px;">Reminder (</div><div style="position:absolute;left:563.00px;top:290px;white-space:pre;font:normal bold 11px 'Liberation Sans';line-height:11px;color:#111;letter-spacing:-0.113px;">Calendar</div><div style="position:absolute;left:610.00px;top:290px;white-space:pre;font:normal normal 11px 'Liberation Sans';line-height:11px;color:#111;">)</div><svg style="position:absolute;left:618px;top:292px;overflow:visible;" width="10" height="8" viewBox="0 0 10 8"><path d="M0.6,0.6 H9.4 L5.0,7.4 Z" fill="none" stroke="#5a5a5a" stroke-width="1" stroke-linejoin="miter"/></svg><div style="position:absolute;left:507px;top:307px;width:14px;height:16px;border:1px solid #55c055;box-sizing:border-box;background:#fff"></div><div style="position:absolute;left:511.00px;top:311px;white-space:pre;font:normal normal 11px 'Liberation Sans';line-height:11px;color:#111;">7</div><svg style="position:absolute;left:520px;top:310px;overflow:visible;" width="9" height="8" viewBox="0 0 9 8"><path d="M0.6,0.6 H8.4 L4.5,7.4 Z" fill="none" stroke="#55aa55" stroke-width="1" stroke-linejoin="miter"/></svg><div style="position:absolute;left:540.00px;top:313px;white-space:pre;font:normal bold 11px 'Liberation Sans';line-height:11px;color:#111;letter-spacing:0.151px;">Calculate</div><div style="position:absolute;left:593.00px;top:313px;white-space:pre;font:normal normal 11px 'Liberation Sans';line-height:11px;color:#111;letter-spacing:-0.655px;">=3+4</div><svg style="position:absolute;left:617px;top:313px;overflow:visible;" width="10" height="8" viewBox="0 0 10 8"><path d="M0.6,0.6 H9.4 L5.0,7.4 Z" fill="none" stroke="#5a5a5a" stroke-width="1" stroke-linejoin="miter"/></svg><div style="position:absolute;left:640.00px;top:313px;white-space:pre;font:normal normal 11px 'Liberation Sans';line-height:11px;color:#111;letter-spacing:-0.106px;">Special</div><svg style="position:absolute;left:0px;top:0px;overflow:visible;" width="1596" height="1040" viewBox="0 0 1596 1040">
<path d="M496,720.5 H579 C590,720.5 591,760 597,793" stroke="#c0c0d8" stroke-width="1" fill="none"/>
<path d="M400,740.5 H579 C589,740.5 591,770 597,793" stroke="#c0c0d8" stroke-width="1" fill="none"/>
<path d="M420,760.5 H579 C588,760.5 591,780 597,793" stroke="#c0c0d8" stroke-width="1" fill="none"/>
<path d="M408,923 H579 C589,923 591,830 597,793" stroke="#c0c0d8" stroke-width="1" fill="none"/>
<path d="M496,720.5 H579 M400,740.5 H579 M420,760.5 H579 M408,923 H579" stroke="#1a1a50" stroke-width="1.3" fill="none"/>
<path d="M579,834 C592,834 590,793 598,793" stroke="#10106a" stroke-width="2" fill="none"/>
<path d="M598,793 H676 C684,793 686,760 688,715" stroke="#10106a" stroke-width="2" fill="none"/>

<path d="M811,715 C813,745 815,756 822,756 H919" stroke="#8a1020" stroke-width="1.6" fill="none"/>
<path d="M920,748 C930,748 930,765 938,765" stroke="#e4e4e4" stroke-width="1" fill="none"/>
<path d="M663,797 C690,780 720,774 748,774 C776,774 806,780 833,795 C840,799 840,805 833,809 C806,824 776,831 748,831 C720,831 690,824 663,808 C657,804 657,800 663,797 Z" fill="#f9c8ca" stroke="#ad8a8a" stroke-width="2.5"/><path d="M748.5,715 V790" stroke="#888" stroke-width="1" fill="none"/>
<path d="M680,812.5 H815" stroke="#4a6aa0" stroke-width="1" fill="none"/>
</svg><div style="position:absolute;left:598px;top:778px;width:78px;height:15px;background:#f3f000"></div><div style="position:absolute;left:600.00px;top:780.5px;white-space:pre;font:normal normal 11px 'Liberation Sans';line-height:11px;color:#111;letter-spacing:-0.410px;">3 In</div><div style="position:absolute;left:621.00px;top:780.5px;white-space:pre;font:normal bold 11px 'Liberation Sans';line-height:11px;color:#111;letter-spacing:0.069px;">node core</div><svg style="position:absolute;left:683px;top:796px;overflow:visible;" width="5" height="6" viewBox="0 0 5 6"><path d="M0,0 L5,3 L0,6 Z" fill="#b01020"/></svg><svg style="position:absolute;left:690px;top:791px;overflow:visible;" width="15" height="15" viewBox="0 0 15 15"><g transform="translate(7.5,7.5)"><path d="M0,-6 L2.6,-3.8 L5.2,-3 L5.2,0 L5.2,3 L2.6,3.8 L0,6 L-2.6,3.8 L-5.2,3 L-5.2,0 L-5.2,-3 L-2.6,-3.8 Z" fill="none" stroke="url(#rb)" stroke-width="2.2" stroke-linejoin="round"/><circle r="2.2" fill="#9fd8e8" stroke="#6aa8c8" stroke-width="0.8"/></g></svg><div style="position:absolute;left:708.00px;top:795px;white-space:pre;font:normal normal 15.5px 'Liberation Sans';line-height:15.5px;color:#4a6aa0;letter-spacing:0.158px;">Latest features</div><div style="position:absolute;left:822px;top:726px;width:97px;height:30px;background:#f6f000"></div><div style="position:absolute;left:826.00px;top:729px;white-space:pre;font:italic normal 11px 'Liberation Sans';line-height:11px;color:#111;letter-spacing:-0.183px;">2 Below node core:</div><div style="position:absolute;left:825.00px;top:744px;white-space:pre;font:normal bold 11px 'Liberation Sans';line-height:11px;color:#111;letter-spacing:0.007px;">Node extensions</div><svg style="position:absolute;left:404px;top:729px;overflow:visible;" width="5" height="6" viewBox="0 0 5 6"><path d="M0,0 L5,3 L0,6 Z" fill="#c01020"/></svg><svg style="position:absolute;left:410px;top:724px;overflow:visible;" width="16" height="16" viewBox="0 0 16 16"><defs><radialGradient id="gl" cx="0.35" cy="0.35" r="0.7"><stop offset="0" stop-color="#a8d8f0"/><stop offset="0.6" stop-color="#4a88b0"/><stop offset="1" stop-color="#2a5a80"/></radialGradient></defs><circle cx="8" cy="8" r="7.3" fill="url(#gl)"/></svg><div style="position:absolute;left:430.00px;top:726px;white-space:pre;font:normal normal 11px 'Liberation Sans';line-height:11px;color:#111;letter-spacing:-0.043px;">External arrow-link (one), and:</div><svg style="position:absolute;left:579px;top:728px;overflow:visible;" width="10" height="8" viewBox="0 0 10 8"><path d="M0.6,0.6 H9.4 L5.0,7.4 Z" fill="none" stroke="#222" stroke-width="1.3" stroke-linejoin="miter"/></svg><svg style="position:absolute;left:424px;top:747px;overflow:visible;" width="10" height="10" viewBox="0 0 10 10"><path d="M9,1 L3.5,6.5 M1,2.5 V9 H7.5 Z" stroke="#1aa01a" stroke-width="2.4" fill="#1aa01a"/></svg><div style="position:absolute;left:441.00px;top:746.5px;white-space:pre;font:normal normal 11px 'Liberation Sans';line-height:11px;color:#111;letter-spacing:-0.002px;">Internal arrow-link (one), or:</div><svg style="position:absolute;left:579px;top:748px;overflow:visible;" width="10" height="8" viewBox="0 0 10 8"><path d="M0.6,0.6 H9.4 L5.0,7.4 Z" fill="none" stroke="#222" stroke-width="1.3" stroke-linejoin="miter"/></svg><div style="position:absolute;left:410.50px;top:910.5px;white-space:pre;font:normal bold 11px 'Liberation Sans';line-height:11px;color:#111;letter-spacing:0.121px;">Text</div><div style="position:absolute;left:441.00px;top:910.5px;white-space:pre;font:normal normal 11px 'Liberation Sans';line-height:11px;color:#111;letter-spacing:-0.981px;">with</div><div style="position:absolute;left:461.00px;top:910.5px;white-space:pre;font:normal normal 11px 'Liberation Sans';line-height:11px;color:#4a78b0;letter-spacing:-0.205px;text-decoration:underline;">in-line</div><div style="position:absolute;left:492.00px;top:910.5px;white-space:pre;font:normal normal 11px 'Liberation Sans';line-height:11px;color:#111;letter-spacing:0.040px;">hyperlink(s), and:</div><svg style="position:absolute;left:579px;top:912px;overflow:visible;" width="10" height="8" viewBox="0 0 10 8"><path d="M0.6,0.6 H9.4 L5.0,7.4 Z" fill="none" stroke="#222" stroke-width="1.3" stroke-linejoin="miter"/></svg><svg style="position:absolute;left:0px;top:0px;overflow:visible;width:0;height:0" width="1" height="1" viewBox="0 0 1 1"><defs>
<symbol id="bee" viewBox="0 0 135 135">
<defs><linearGradient id="tg" x1="0" y1="0" x2="0" y2="1"><stop offset="0" stop-color="#179896"/><stop offset="1" stop-color="#0c8884"/></linearGradient></defs><rect x="0" y="0" width="135" height="135" fill="url(#tg)"/>
<g stroke="#3ab4b4" stroke-width="1" fill="none" opacity="0.75">
<polygon points="4.7,3.0 -4.0,8.0 -12.7,3.0 -12.7,-7.0 -4.0,-12.0 4.7,-7.0"/><polygon points="22.7,3.0 14.0,8.0 5.3,3.0 5.3,-7.0 14.0,-12.0 22.7,-7.0"/><polygon points="40.7,3.0 32.0,8.0 23.3,3.0 23.3,-7.0 32.0,-12.0 40.7,-7.0"/><polygon points="58.7,3.0 50.0,8.0 41.3,3.0 41.3,-7.0 50.0,-12.0 58.7,-7.0"/><polygon points="76.7,3.0 68.0,8.0 59.3,3.0 59.3,-7.0 68.0,-12.0 76.7,-7.0"/><polygon points="94.7,3.0 86.0,8.0 77.3,3.0 77.3,-7.0 86.0,-12.0 94.7,-7.0"/><polygon points="112.7,3.0 104.0,8.0 95.3,3.0 95.3,-7.0 104.0,-12.0 112.7,-7.0"/><polygon points="130.7,3.0 122.0,8.0 113.3,3.0 113.3,-7.0 122.0,-12.0 130.7,-7.0"/><polygon points="148.7,3.0 140.0,8.0 131.3,3.0 131.3,-7.0 140.0,-12.0 148.7,-7.0"/><polygon points="13.7,18.5 5.0,23.5 -3.7,18.5 -3.7,8.5 5.0,3.5 13.7,8.5"/><polygon points="31.7,18.5 23.0,23.5 14.3,18.5 14.3,8.5 23.0,3.5 31.7,8.5"/><polygon points="49.7,18.5 41.0,23.5 32.3,18.5 32.3,8.5 41.0,3.5 49.7,8.5"/><polygon points="67.7,18.5 59.0,23.5 50.3,18.5 50.3,8.5 59.0,3.5 67.7,8.5"/><polygon points="85.7,18.5 77.0,23.5 68.3,18.5 68.3,8.5 77.0,3.5 85.7,8.5"/><polygon points="103.7,18.5 95.0,23.5 86.3,18.5 86.3,8.5 95.0,3.5 103.7,8.5"/><polygon points="121.7,18.5 113.0,23.5 104.3,18.5 104.3,8.5 113.0,3.5 121.7,8.5"/><polygon points="139.7,18.5 131.0,23.5 122.3,18.5 122.3,8.5 131.0,3.5 139.7,8.5"/><polygon points="157.7,18.5 149.0,23.5 140.3,18.5 140.3,8.5 149.0,3.5 157.7,8.5"/><polygon points="4.7,34.0 -4.0,39.0 -12.7,34.0 -12.7,24.0 -4.0,19.0 4.7,24.0"/><polygon points="22.7,34.0 14.0,39.0 5.3,34.0 5.3,24.0 14.0,19.0 22.7,24.0"/><polygon points="40.7,34.0 32.0,39.0 23.3,34.0 23.3,24.0 32.0,19.0 40.7,24.0"/><polygon points="58.7,34.0 50.0,39.0 41.3,34.0 41.3,24.0 50.0,19.0 58.7,24.0"/><polygon points="76.7,34.0 68.0,39.0 59.3,34.0 59.3,24.0 68.0,19.0 76.7,24.0"/><polygon points="94.7,34.0 86.0,39.0 77.3,34.0 77.3,24.0 86.0,19.0 94.7,24.0"/><polygon points="112.7,34.0 104.0,39.0 95.3,34.0 95.3,24.0 104.0,19.0 112.7,24.0"/><polygon points="130.7,34.0 122.0,39.0 113.3,34.0 113.3,24.0 122.0,19.0 130.7,24.0"/><polygon points="148.7,34.0 140.0,39.0 131.3,34.0 131.3,24.0 140.0,19.0 148.7,24.0"/><polygon points="13.7,49.5 5.0,54.5 -3.7,49.5 -3.7,39.5 5.0,34.5 13.7,39.5"/><polygon points="31.7,49.5 23.0,54.5 14.3,49.5 14.3,39.5 23.0,34.5 31.7,39.5"/><polygon points="49.7,49.5 41.0,54.5 32.3,49.5 32.3,39.5 41.0,34.5 49.7,39.5"/><polygon points="67.7,49.5 59.0,54.5 50.3,49.5 50.3,39.5 59.0,34.5 67.7,39.5"/><polygon points="85.7,49.5 77.0,54.5 68.3,49.5 68.3,39.5 77.0,34.5 85.7,39.5"/><polygon points="103.7,49.5 95.0,54.5 86.3,49.5 86.3,39.5 95.0,34.5 103.7,39.5"/><polygon points="121.7,49.5 113.0,54.5 104.3,49.5 104.3,39.5 113.0,34.5 121.7,39.5"/><polygon points="139.7,49.5 131.0,54.5 122.3,49.5 122.3,39.5 131.0,34.5 139.7,39.5"/><polygon points="157.7,49.5 149.0,54.5 140.3,49.5 140.3,39.5 149.0,34.5 157.7,39.5"/><polygon points="4.7,65.0 -4.0,70.0 -12.7,65.0 -12.7,55.0 -4.0,50.0 4.7,55.0"/><polygon points="22.7,65.0 14.0,70.0 5.3,65.0 5.3,55.0 14.0,50.0 22.7,55.0"/><polygon points="40.7,65.0 32.0,70.0 23.3,65.0 23.3,55.0 32.0,50.0 40.7,55.0"/><polygon points="58.7,65.0 50.0,70.0 41.3,65.0 41.3,55.0 50.0,50.0 58.7,55.0"/><polygon points="76.7,65.0 68.0,70.0 59.3,65.0 59.3,55.0 68.0,50.0 76.7,55.0"/><polygon points="94.7,65.0 86.0,70.0 77.3,65.0 77.3,55.0 86.0,50.0 94.7,55.0"/><polygon points="112.7,65.0 104.0,70.0 95.3,65.0 95.3,55.0 104.0,50.0 112.7,55.0"/><polygon points="130.7,65.0 122.0,70.0 113.3,65.0 113.3,55.0 122.0,50.0 130.7,55.0"/><polygon points="148.7,65.0 140.0,70.0 131.3,65.0 131.3,55.0 140.0,50.0 148.7,55.0"/><polygon points="13.7,80.5 5.0,85.5 -3.7,80.5 -3.7,70.5 5.0,65.5 13.7,70.5"/><polygon points="31.7,80.5 23.0,85.5 14.3,80.5 14.3,70.5 23.0,65.5 31.7,70.5"/><polygon points="49.7,80.5 41.0,85.5 32.3,80.5 32.3,70.5 41.0,65.5 49.7,70.5"/><polygon points="67.7,80.5 59.0,85.5 50.3,80.5 50.3,70.5 59.0,65.5 67.7,70.5"/><polygon points="85.7,80.5 77.0,85.5 68.3,80.5 68.3,70.5 77.0,65.5 85.7,70.5"/><polygon points="103.7,80.5 95.0,85.5 86.3,80.5 86.3,70.5 95.0,65.5 103.7,70.5"/><polygon points="121.7,80.5 113.0,85.5 104.3,80.5 104.3,70.5 113.0,65.5 121.7,70.5"/><polygon points="139.7,80.5 131.0,85.5 122.3,80.5 122.3,70.5 131.0,65.5 139.7,70.5"/><polygon points="157.7,80.5 149.0,85.5 140.3,80.5 140.3,70.5 149.0,65.5 157.7,70.5"/><polygon points="4.7,96.0 -4.0,101.0 -12.7,96.0 -12.7,86.0 -4.0,81.0 4.7,86.0"/><polygon points="22.7,96.0 14.0,101.0 5.3,96.0 5.3,86.0 14.0,81.0 22.7,86.0"/><polygon points="40.7,96.0 32.0,101.0 23.3,96.0 23.3,86.0 32.0,81.0 40.7,86.0"/><polygon points="58.7,96.0 50.0,101.0 41.3,96.0 41.3,86.0 50.0,81.0 58.7,86.0"/><polygon points="76.7,96.0 68.0,101.0 59.3,96.0 59.3,86.0 68.0,81.0 76.7,86.0"/><polygon points="94.7,96.0 86.0,101.0 77.3,96.0 77.3,86.0 86.0,81.0 94.7,86.0"/><polygon points="112.7,96.0 104.0,101.0 95.3,96.0 95.3,86.0 104.0,81.0 112.7,86.0"/><polygon points="130.7,96.0 122.0,101.0 113.3,96.0 113.3,86.0 122.0,81.0 130.7,86.0"/><polygon points="148.7,96.0 140.0,101.0 131.3,96.0 131.3,86.0 140.0,81.0 148.7,86.0"/>
</g>
<path d="M0,83 C40,79 85,93 135,87 V95 C90,100 40,88 0,88 Z" fill="#a2d63a"/>
<path d="M55,95 C90,101 115,99 135,95 V104 C110,107 85,106 55,100 Z" fill="#5a2a9a"/>
<path d="M0,99 C40,95 85,108 135,105 V111 C85,115 40,102 0,104 Z" fill="#c8f6f6"/>
<ellipse cx="38" cy="99" rx="17" ry="15" transform="rotate(-25 38 99)" fill="#f2d83a"/>
<path d="M26,86 L50,106 M31,83 L55,99 M21,96 L42,113" stroke="#111" stroke-width="3.2"/>
<ellipse cx="38" cy="99" rx="17" ry="15" transform="rotate(-25 38 99)" fill="none" stroke="#000" stroke-width="2.6"/>
<g fill="#fff" stroke="#000" stroke-width="2.6">
<ellipse cx="36" cy="56" rx="19" ry="11.5" transform="rotate(32 36 56)"/>
<ellipse cx="36.5" cy="74" rx="17.5" ry="9.5" transform="rotate(8 36.5 74)"/>
</g>
<circle cx="62" cy="65" r="12" fill="#111"/>
<path d="M58,55 C56,48 55,43 55,39 M71,60 C77,59 83,61 86,66" stroke="#111" stroke-width="3" fill="none" stroke-linecap="round"/>
<g fill="#fff" stroke="#000" stroke-width="2.6">
<ellipse cx="75" cy="89" rx="21" ry="12.5" transform="rotate(33 75 89)"/>
<ellipse cx="63.6" cy="90" rx="9.5" ry="14.5" transform="rotate(-8 63.6 90)"/>
</g>
<g transform="translate(0,-4)">
<polygon points="95,22 101,25.5 101,32.5 95,36 89,32.5 89,25.5" fill="#e8505a"/>
<polygon points="84,28 90,31.5 90,38.5 84,42 78,38.5 78,31.5" fill="#f2d020"/>
<polygon points="106,28 112,31.5 112,38.5 106,42 100,38.5 100,31.5" fill="#f08a28"/>
<polygon points="95,34 101,37.5 101,44.5 95,48 89,44.5 89,37.5" fill="#48c048"/>
<polygon points="106,41 112,44.5 112,51.5 106,55 100,51.5 100,44.5" fill="#6a6ae0"/>
<polygon points="94,47 100,50.5 100,57.5 94,61 88,57.5 88,50.5" fill="#e060d8"/>
</g>
</symbol>
</defs></svg><div style="position:absolute;left:438px;top:764px;width:142px;height:141px;border:1.5px solid #101858;border-radius:6px;box-sizing:border-box;background:#c8f4f4"></div><svg style="position:absolute;left:441px;top:767px;overflow:visible;" width="135" height="135" viewBox="0 0 135 135"><use href="#bee" x="0" y="0" width="135" height="135"/></svg><svg style="position:absolute;left:1000px;top:873px;overflow:visible;" width="56" height="56" viewBox="0 0 56 56"><use href="#bee" x="0" y="0" width="56" height="56"/></svg><div style="position:absolute;left:927px;top:690px;width:315px;height:36px;background:#80c9c6;border:3px solid #5f9e9c;box-sizing:border-box;border-radius:8px"></div><div style="position:absolute;left:1127px;top:735px;width:151px;height:42px;background:#98fbf9;border:3px solid #68abaa;box-sizing:border-box;border-radius:5px"></div><svg style="position:absolute;left:1141px;top:748px;overflow:visible;" width="12" height="16" viewBox="0 0 12 16"><path d="M2,4.5 C2,1.5 4.5,0.5 6.5,0.5 C9,0.5 11,2.2 11,4.8 C11,7.5 8,8.5 7,10 V13" stroke="#16384a" stroke-width="2.6" fill="none"/><rect x="4.5" y="13" width="5" height="2.5" fill="#16384a"/></svg><div style="position:absolute;left:1159.00px;top:750px;white-space:pre;font:normal normal 11px 'Liberation Sans';line-height:11px;color:#111;letter-spacing:-0.297px;">Sizeable</div><div style="position:absolute;left:1203.50px;top:750px;white-space:pre;font:normal bold 11px 'Liberation Sans';line-height:11px;color:#111;letter-spacing:-0.043px;">image</div><div style="position:absolute;left:1238.00px;top:750px;white-space:pre;font:normal normal 11px 'Liberation Sans';line-height:11px;color:#111;letter-spacing:0.246px;">(one)</div><div style="position:absolute;left:1138px;top:763px;width:128px;height:1px;background:#1a2a3a"></div><div style="position:absolute;left:1127px;top:779px;width:132px;height:40px;background:#98fbf9;border:3px solid #68abaa;box-sizing:border-box;border-radius:5px"></div><svg style="position:absolute;left:1141px;top:790px;overflow:visible;" width="12" height="16" viewBox="0 0 12 16"><path d="M2,4.5 C2,1.5 4.5,0.5 6.5,0.5 C9,0.5 11,2.2 11,4.8 C11,7.5 8,8.5 7,10 V13" stroke="#16384a" stroke-width="2.6" fill="none"/><rect x="4.5" y="13" width="5" height="2.5" fill="#16384a"/></svg><div style="position:absolute;left:1159.00px;top:792px;white-space:pre;font:normal normal 11px 'Liberation Sans';line-height:11px;color:#111;letter-spacing:-0.168px;">Scientific</div><div style="position:absolute;left:1205.50px;top:792px;white-space:pre;font:normal bold 11px 'Liberation Sans';line-height:11px;color:#111;letter-spacing:-0.203px;">formula</div><div style="position:absolute;left:1138px;top:805px;width:118px;height:1px;background:#1a2a3a"></div><div style="position:absolute;left:1127px;top:821px;width:98px;height:39px;background:#98fbf9;border:3px solid #68abaa;box-sizing:border-box;border-radius:5px"></div><svg style="position:absolute;left:1141px;top:832px;overflow:visible;" width="12" height="16" viewBox="0 0 12 16"><path d="M2,4.5 C2,1.5 4.5,0.5 6.5,0.5 C9,0.5 11,2.2 11,4.8 C11,7.5 8,8.5 7,10 V13" stroke="#16384a" stroke-width="2.6" fill="none"/><rect x="4.5" y="13" width="5" height="2.5" fill="#16384a"/></svg><div style="position:absolute;left:1159.00px;top:833px;white-space:pre;font:normal bold 11px 'Liberation Sans';line-height:11px;color:#111;letter-spacing:0.019px;">Attributes</div><div style="position:absolute;left:1138px;top:847px;width:76px;height:1px;background:#1a2a3a"></div><div style="position:absolute;left:1128px;top:862px;width:139px;height:41px;background:#98fbf9;border:3px solid #68abaa;box-sizing:border-box;border-radius:5px"></div><svg style="position:absolute;left:1141px;top:874px;overflow:visible;" width="12" height="16" viewBox="0 0 12 16"><path d="M2,4.5 C2,1.5 4.5,0.5 6.5,0.5 C9,0.5 11,2.2 11,4.8 C11,7.5 8,8.5 7,10 V13" stroke="#16384a" stroke-width="2.6" fill="none"/><rect x="4.5" y="13" width="5" height="2.5" fill="#16384a"/></svg><div style="position:absolute;left:1159.00px;top:876px;white-space:pre;font:normal bold 11px 'Liberation Sans';line-height:11px;color:#111;letter-spacing:0.156px;">Node details</div><div style="position:absolute;left:1228.00px;top:876px;white-space:pre;font:normal normal 11px 'Liberation Sans';line-height:11px;color:#111;letter-spacing:0.521px;">(text)</div><div style="position:absolute;left:1138px;top:889px;width:118px;height:1px;background:#1a2a3a"></div><div style="position:absolute;left:1138px;top:902px;width:67px;height:47px;background:#fdf59a"></div><div style="position:absolute;left:1138px;top:949px;width:67px;height:1px;background:#8a2020"></div><svg style="position:absolute;left:1146px;top:905px;overflow:visible;" width="5" height="14" viewBox="0 0 5 14"><path d="M1,0 H4 L3,9 H2 Z" fill="#16384a"/><rect x="1" y="11" width="3" height="2.5" fill="#16384a"/></svg><div style="position:absolute;left:1160.00px;top:907px;white-space:pre;font:italic normal 10.5px 'Liberation Sans';line-height:10.5px;color:#111;letter-spacing:0.196px;">Can be</div><div style="position:absolute;left:1160.00px;top:922px;white-space:pre;font:italic normal 10.5px 'Liberation Sans';line-height:10.5px;color:#111;letter-spacing:0.262px;">hidden</div><div style="position:absolute;left:1160.00px;top:937px;white-space:pre;font:italic normal 10.5px 'Liberation Sans';line-height:10.5px;color:#111;">(</div><div style="position:absolute;left:1164.00px;top:937px;white-space:pre;font:italic bold 10.5px 'Liberation Sans';line-height:10.5px;color:#111;letter-spacing:0.224px;">tooltip</div><div style="position:absolute;left:1199.00px;top:937px;white-space:pre;font:italic normal 10.5px 'Liberation Sans';line-height:10.5px;color:#111;">)</div><div style="position:absolute;left:938px;top:756px;width:182px;height:20px;border:1.3px solid #c03040;box-sizing:border-box;border-radius:6px;background:#fff"></div><div style="position:absolute;left:941.00px;top:761.5px;white-space:pre;font:normal normal 10.5px 'Liberation Sans';line-height:10.5px;color:#111;letter-spacing:0.176px;">Below this node core:</div><svg style="position:absolute;left:940px;top:777px;overflow:visible;" width="8" height="7" viewBox="0 0 8 7"><path d="M0.6,6.4 L4,0.8 L7.4,6.4 Z" fill="none" stroke="#111" stroke-width="1.3"/></svg><div style="position:absolute;left:952.00px;top:778.5px;white-space:pre;font:normal bold 11px 'Liberation Sans';line-height:11px;color:#111;letter-spacing:0.287px;">Text</div><div style="position:absolute;left:982.00px;top:778.5px;white-space:pre;font:normal normal 11px 'Liberation Sans';line-height:11px;color:#111;letter-spacing:-0.815px;">with</div><div style="position:absolute;left:1003.00px;top:778.5px;white-space:pre;font:normal normal 11px 'Liberation Sans';line-height:11px;color:#4a78b0;letter-spacing:-0.205px;text-decoration:underline;">in-line</div><div style="position:absolute;left:1035.00px;top:778.5px;white-space:pre;font:normal normal 11px 'Liberation Sans';line-height:11px;color:#111;letter-spacing:-0.077px;">hyperlink(s), and:</div><div style="position:absolute;left:938px;top:791px;width:164px;height:54px;border:2px solid #a01020;border-top:1px solid #c03040;box-sizing:border-box;background:#fff"></div><div style="position:absolute;left:939px;top:800px;width:162px;height:1.5px;background:#c02030"></div><div style="position:absolute;left:939px;top:823px;width:162px;height:1.5px;background:#a01828"></div><div style="position:absolute;left:1018.5px;top:792px;width:1.5px;height:52px;background:#b01828"></div><div style="position:absolute;left:943.00px;top:806.5px;white-space:pre;font:normal normal 12px 'Liberation Sans';line-height:12px;color:#111;letter-spacing:-0.674px;">a1</div><div style="position:absolute;left:1023.00px;top:806.5px;white-space:pre;font:normal normal 12px 'Liberation Sans';line-height:12px;color:#111;letter-spacing:0.163px;">value1</div><div style="position:absolute;left:943.00px;top:827.5px;white-space:pre;font:normal normal 12px 'Liberation Sans';line-height:12px;color:#111;letter-spacing:-0.674px;">a2</div><div style="position:absolute;left:1023.00px;top:827.5px;white-space:pre;font:normal normal 12px 'Liberation Sans';line-height:12px;color:#111;letter-spacing:0.163px;">value2</div><div style="position:absolute;left:987.00px;top:852px;white-space:pre;font:normal normal 12.5px 'Liberation Serif';line-height:12.5px;color:#111;">I</div><div style="position:absolute;left:992.00px;top:850px;white-space:pre;font:normal normal 9px 'Liberation Serif';line-height:9px;color:#666;">♡</div><div style="position:absolute;left:999.50px;top:852px;white-space:pre;font:normal normal 12.5px 'Liberation Serif';line-height:12.5px;color:#222;-webkit-text-stroke:0.3px #222;">J</div><div style="position:absolute;left:1004.50px;top:852px;white-space:pre;font:normal normal 12.5px 'Liberation Serif';line-height:12.5px;color:#111;">L</div><div style="position:absolute;left:1008.50px;top:852px;white-space:pre;font:normal normal 8px 'Liberation Serif';line-height:8px;color:#111;">A</div><div style="position:absolute;left:1013.00px;top:852px;white-space:pre;font:normal normal 12.5px 'Liberation Serif';line-height:12.5px;color:#111;">T</div><div style="position:absolute;left:1023.00px;top:855px;white-space:pre;font:normal normal 12.5px 'Liberation Serif';line-height:12.5px;color:#111;">E</div><div style="position:absolute;left:1030.00px;top:852px;white-space:pre;font:normal normal 12.5px 'Liberation Serif';line-height:12.5px;color:#111;">X</div><div style="position:absolute;left:1040.00px;top:852px;white-space:pre;font:normal normal 12.5px 'Liberation Serif';line-height:12.5px;color:#111;letter-spacing:0.955px;">Math</div><svg style="position:absolute;left:0px;top:0px;overflow:visible;" width="1596" height="1040" viewBox="0 0 1596 1040">
<path d="M1125,780 C1124,850 1128,920 1137,950" stroke="#e0e0e0" stroke-width="1" fill="none"/>
<g opacity="0.6">
<path d="M1160,748 C1140,740 1110,735 1092,731" stroke="#7a8cc8" stroke-width="1.8" stroke-dasharray="4 4" fill="none"/>
<path d="M1084,729 L1098,726 L1095,736 Z" fill="#6a7cc0"/>
<path d="M1180,790 C1160,785 1130,782 1118,781" stroke="#8a98c8" stroke-width="1.3" stroke-dasharray="3 4" fill="none"/>
<path d="M1128,841 H1112" stroke="#7a8cc8" stroke-width="1.8" stroke-dasharray="3 4" fill="none"/>
<path d="M1103,839 L1114,834 L1113,845 Z" fill="#6a7cc0"/>
<path d="M1160,883 C1150,887 1140,890 1132,895" stroke="#7a8cc8" stroke-width="1.6" stroke-dasharray="3 3" fill="none"/>
<path d="M1127,896 L1137,887 L1140,898 Z" fill="#6a7cc0"/>
<path d="M1100,778 L1110,774 L1108,784 Z" fill="#7a8cc8"/>
</g>
</svg><div style="position:absolute;left:316px;top:320px;width:963px;height:399px;background:#f2f2f2;border:1px solid #646464;box-sizing:border-box;box-shadow:1px 2px 12px 3px rgba(0,0,0,0.2), inset 1px 1px 0 #fff, inset -1px -1px 0 #fafafa"></div><div style="position:absolute;left:325.00px;top:331px;white-space:pre;font:normal normal 12px 'Liberation Sans';line-height:12px;color:#111;letter-spacing:0.181px;">Статистика карты...</div><svg style="position:absolute;left:1251px;top:331px;overflow:visible;" width="11" height="11" viewBox="0 0 11 11"><path d="M0.5,0.5 L10.5,10.5 M10.5,0.5 L0.5,10.5" stroke="#111" stroke-width="1.1"/></svg><div style="position:absolute;left:329px;top:363px;width:936px;height:299px;border:1px solid #a3a3a3;box-sizing:border-box;box-shadow:inset 1px 1px 0 #fff, 1px 1px 0 #fff"></div><div style="position:absolute;left:342px;top:470px;width:912px;height:1px;background:#a8a8a8"></div><div style="position:absolute;left:342px;top:471px;width:912px;height:1px;background:#fff"></div><div style="position:absolute;left:342px;top:554px;width:912px;height:1px;background:#a8a8a8"></div><div style="position:absolute;left:342px;top:555px;width:912px;height:1px;background:#fff"></div><div style="position:absolute;left:382.50px;top:376px;white-space:pre;font:normal normal 12px 'Liberation Sans';line-height:12px;color:#111;letter-spacing:0.374px;">Имя файла:</div><div style="position:absolute;left:766.00px;top:376px;white-space:pre;font:normal normal 12px 'Liberation Sans';line-height:12px;color:#111;letter-spacing:0.480px;">C:\Program Files\Freeplane\doc\freeplaneFunctions.mm</div><div style="position:absolute;left:382.50px;top:402px;white-space:pre;font:normal normal 12px 'Liberation Sans';line-height:12px;color:#111;letter-spacing:0.308px;">Размер файла:</div><div style="position:absolute;left:766.00px;top:402px;white-space:pre;font:normal normal 12px 'Liberation Sans';line-height:12px;color:#111;letter-spacing:0.415px;">36 108 Байтов</div><div style="position:absolute;left:382.50px;top:425px;white-space:pre;font:normal normal 12px 'Liberation Sans';line-height:12px;color:#111;letter-spacing:0.563px;">Файл сохранён:</div><div style="position:absolute;left:766.00px;top:425px;white-space:pre;font:normal normal 12px 'Liberation Sans';line-height:12px;color:#111;letter-spacing:0.537px;">воскресенье, 12 ноября 2023 г., 21:46:50 Восточная Европа, стандартное время</div><div style="position:absolute;left:382.50px;top:448px;white-space:pre;font:normal normal 12px 'Liberation Sans';line-height:12px;color:#111;letter-spacing:0.766px;">Изменений с последнего сохранения:</div><div style="position:absolute;left:766.00px;top:448px;white-space:pre;font:normal normal 12px 'Liberation Sans';line-height:12px;color:#111;">0</div><div style="position:absolute;left:382.50px;top:483px;white-space:pre;font:normal normal 12px 'Liberation Sans';line-height:12px;color:#111;letter-spacing:0.589px;">Общее количество узлов:</div><div style="position:absolute;left:766.00px;top:483px;white-space:pre;font:normal normal 12px 'Liberation Sans';line-height:12px;color:#111;">67</div><div style="position:absolute;left:382.50px;top:509px;white-space:pre;font:normal normal 12px 'Liberation Sans';line-height:12px;color:#111;letter-spacing:0.710px;">Общее количество узлов с подчинёнными:</div><div style="position:absolute;left:766.00px;top:509px;white-space:pre;font:normal normal 12px 'Liberation Sans';line-height:12px;color:#111;">47</div><div style="position:absolute;left:382.50px;top:532px;white-space:pre;font:normal normal 12px 'Liberation Sans';line-height:12px;color:#111;letter-spacing:0.538px;">Количество главных узлов:</div><div style="position:absolute;left:766.00px;top:532px;white-space:pre;font:normal normal 12px 'Liberation Sans';line-height:12px;color:#111;">13</div><div style="position:absolute;left:382.50px;top:567px;white-space:pre;font:normal normal 12px 'Liberation Sans';line-height:12px;color:#111;letter-spacing:0.613px;">Количество узлов в выбранной ветке(ах):</div><div style="position:absolute;left:766.00px;top:567px;white-space:pre;font:normal normal 12px 'Liberation Sans';line-height:12px;color:#111;">67</div><div style="position:absolute;left:382.50px;top:593px;white-space:pre;font:normal normal 12px 'Liberation Sans';line-height:12px;color:#111;letter-spacing:0.691px;">Количество узлов с подчинёнными в выбранной ветке(ах):</div><div style="position:absolute;left:766.00px;top:593px;white-space:pre;font:normal normal 12px 'Liberation Sans';line-height:12px;color:#111;">47</div><div style="position:absolute;left:382.50px;top:616px;white-space:pre;font:normal normal 12px 'Liberation Sans';line-height:12px;color:#111;letter-spacing:0.723px;">Количество подчинённых выбранных узлов:</div><div style="position:absolute;left:766.00px;top:616px;white-space:pre;font:normal normal 12px 'Liberation Sans';line-height:12px;color:#111;">11</div><div style="position:absolute;left:382.50px;top:639px;white-space:pre;font:normal normal 12px 'Liberation Sans';line-height:12px;color:#111;letter-spacing:0.559px;">Количество выделенных узлов:</div><div style="position:absolute;left:766.00px;top:639px;white-space:pre;font:normal normal 12px 'Liberation Sans';line-height:12px;color:#111;">1</div><svg style="position:absolute;left:345px;top:376px;overflow:visible;" width="13" height="17" viewBox="0 0 13 17"><path d="M0,0 H8 L12,4 V16 H0 Z" fill="#2a2a2a"/><path d="M8.3,0 V3.7 H12" fill="none" stroke="#f2f2f2" stroke-width="1.6"/><circle cx="3" cy="12" r="5" fill="#f2fbff"/><circle cx="3" cy="12" r="4" fill="#1f6e96"/><path d="M3,9.3 V14.7 M0.3,12 H5.7" stroke="#a8f0ff" stroke-width="2"/></svg><svg style="position:absolute;left:345px;top:482px;overflow:visible;" width="13" height="17" viewBox="0 0 13 17"><path d="M0,0 H8 L12,4 V16 H0 Z" fill="#2a2a2a"/><path d="M8.3,0 V3.7 H12" fill="none" stroke="#f2f2f2" stroke-width="1.6"/><circle cx="3" cy="12" r="5" fill="#f2fbff"/><circle cx="3" cy="12" r="4" fill="#2a80b8"/><path d="M-1,13 H3 V16" fill="none" stroke="#b6f4ff" stroke-width="1.5"/></svg><svg style="position:absolute;left:343px;top:565px;overflow:visible;" width="18" height="17" viewBox="0 0 18 17"><path d="M6,8 V5 C6,3.5 7,2.5 9,2.5" fill="none" stroke="#222" stroke-width="1.6"/><rect x="10" y="1" width="8" height="4" fill="#222"/><rect x="10" y="7.5" width="8" height="4" fill="#222"/><circle cx="5" cy="13" r="5" fill="#f2fbff"/><circle cx="5" cy="13" r="4" fill="#2a80b8"/><path d="M1,14 H5 V17" fill="none" stroke="#b6f4ff" stroke-width="1.5"/></svg><div style="position:absolute;left:1190px;top:678px;width:76px;height:28px;background:#a6c8ec;border-radius:4px"></div><div style="position:absolute;left:1192px;top:680px;width:72px;height:24px;background:#4a88cc;border:1px solid #3f78b8;box-sizing:border-box;border-radius:3px"></div><div style="position:absolute;left:1220.00px;top:687px;white-space:pre;font:normal bold 12px 'Liberation Sans';line-height:12px;color:#fff;letter-spacing:-1.334px;">OK</div>
</body></html>
